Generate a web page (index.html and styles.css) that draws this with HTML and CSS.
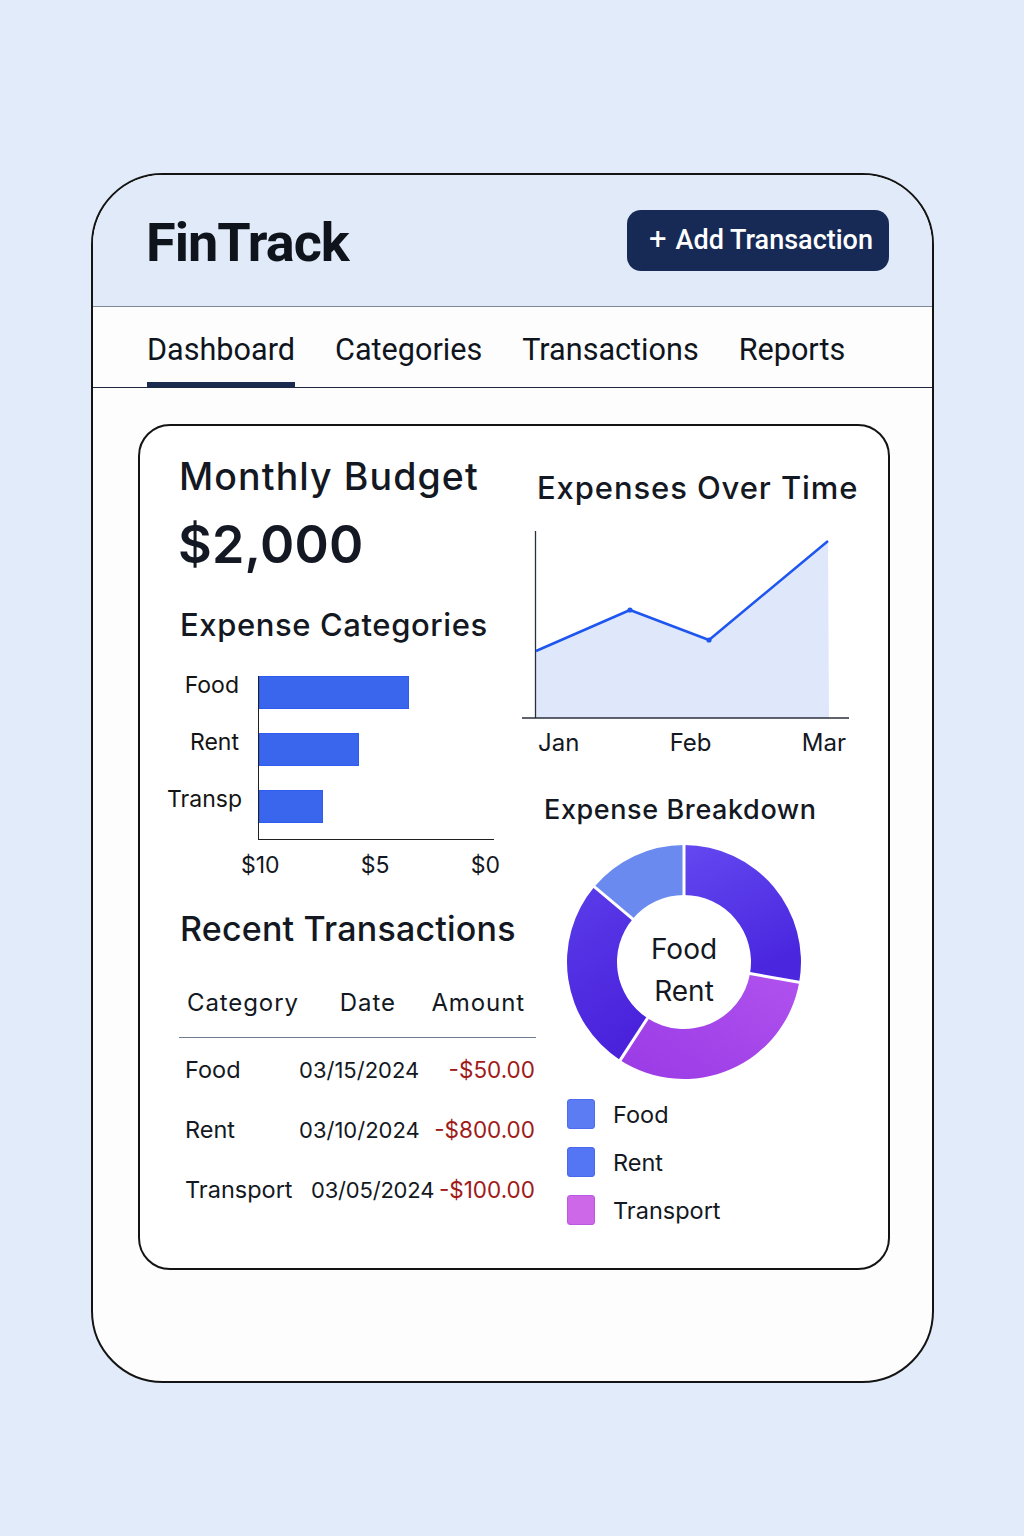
FILE: index.html
```html
<!DOCTYPE html>
<html lang="en">
<head>
<meta charset="utf-8">
<title>FinTrack</title>
<link rel="stylesheet" href="styles.css">
</head>
<body>
<div class="app">
  <header class="topbar">
    <h1 class="brand">FinTrack</h1>
    <button class="add-btn"><span class="plus">+</span>Add Transaction</button>
  </header>
  <nav class="tabs">
    <a class="tab active">Dashboard</a>
    <a class="tab">Categories</a>
    <a class="tab">Transactions</a>
    <a class="tab">Reports</a>
  </nav>
  <main class="main">
    <section class="panel">
      <div class="col-left">
        <h2 class="budget-title">Monthly Budget</h2>
        <div class="budget-amount">$2,000</div>
        <h3 class="cat-title">Expense Categories</h3>
        <div class="bar-chart">
          <div class="bar-labels">
            <span class="bar-label">Food</span>
            <span class="bar-label">Rent</span>
            <span class="bar-label">Transp</span>
          </div>
          <div class="plot">
            <div class="bar" style="width:150px"></div>
            <div class="bar" style="width:100px"></div>
            <div class="bar" style="width:64px"></div>
          </div>
        </div>
        <div class="bar-ticks"><span>$10</span><span>$5</span><span>$0</span></div>

        <h3 class="recent-title">Recent Transactions</h3>
        <div class="tx-table">
          <div class="tx-head">
            <span class="th-cat">Category</span>
            <span class="th-date">Date</span>
            <span class="th-amt">Amount</span>
          </div>
          <div class="tx-row">
            <span class="td-cat">Food</span>
            <span class="td-date">03/15/2024</span>
            <span class="td-amt">-$50.00</span>
          </div>
          <div class="tx-row">
            <span class="td-cat">Rent</span>
            <span class="td-date">03/10/2024</span>
            <span class="td-amt">-$800.00</span>
          </div>
          <div class="tx-row tx-row-wide">
            <span class="td-cat">Transport</span>
            <span class="td-date">03/05/2024</span>
            <span class="td-amt">-$100.00</span>
          </div>
        </div>
      </div>

      <div class="col-right">
        <h3 class="time-title">Expenses Over Time</h3>
        <svg class="line-chart" width="330" height="192" viewBox="0 0 330 192">
          <polygon points="14,189 14,122 108,81 187,111 306,12 307,189" fill="#dfe8fb"/>
          <line x1="13.5" y1="2" x2="13.5" y2="189" stroke="#2a2f3a" stroke-width="1.3"/>
          <line x1="0" y1="189" x2="327" y2="189" stroke="#2a2f3a" stroke-width="1.3"/>
          <polyline points="14,122 108,81 187,111 306,12" fill="none" stroke="#1f56f0" stroke-width="2.5" stroke-linejoin="round"/>
          <circle cx="108" cy="81" r="2.6" fill="#1f56f0"/>
          <circle cx="187" cy="111" r="2.6" fill="#1f56f0"/>
        </svg>
        <div class="month-labels"><span>Jan</span><span>Feb</span><span>Mar</span></div>

        <h3 class="breakdown-title">Expense Breakdown</h3>
        <div class="donut-wrap">
          <svg class="donut" width="240" height="240" viewBox="0 0 240 240">
            <defs>
              <linearGradient id="g1" x1="0" y1="0" x2="0.4" y2="1">
                <stop offset="0" stop-color="#6448f0"/>
                <stop offset="1" stop-color="#4a27df"/>
              </linearGradient>
              <linearGradient id="g2" x1="1" y1="0" x2="0" y2="1">
                <stop offset="0" stop-color="#b052ee"/>
                <stop offset="1" stop-color="#9a3ae6"/>
              </linearGradient>
              <linearGradient id="g3" x1="0" y1="0" x2="0.3" y2="1">
                <stop offset="0" stop-color="#5a3ce9"/>
                <stop offset="1" stop-color="#4a22dc"/>
              </linearGradient>
            </defs>
            <path d="M120,3 A117,117 0 0 1 235.22,140.31 L185.98,131.63 A67,67 0 0 0 120,53 Z" fill="url(#g1)"/>
            <path d="M235.22,140.31 A117,117 0 0 1 56.28,218.13 L83.51,176.19 A67,67 0 0 0 185.98,131.63 Z" fill="url(#g2)"/>
            <path d="M56.28,218.13 A117,117 0 0 1 30.37,44.8 L68.68,76.93 A67,67 0 0 0 83.51,176.19 Z" fill="url(#g3)"/>
            <path d="M30.37,44.8 A117,117 0 0 1 120,3 L120,53 A67,67 0 0 0 68.68,76.93 Z" fill="#6a8aef"/>
            <g stroke="#ffffff" stroke-width="3">
              <line x1="120" y1="0" x2="120" y2="56"/>
              <line x1="238" y1="140.8" x2="183" y2="131.1"/>
              <line x1="54.6" y1="220.6" x2="85.1" y2="173.7"/>
              <line x1="28.1" y1="42.9" x2="71" y2="78.9"/>
            </g>
          </svg>
          <div class="donut-center"><span>Food</span><span>Rent</span></div>
        </div>
        <ul class="legend">
          <li><span class="swatch sw-food"></span>Food</li>
          <li><span class="swatch sw-rent"></span>Rent</li>
          <li><span class="swatch sw-transport"></span>Transport</li>
        </ul>
      </div>
    </section>
  </main>
</div>
</body>
</html>
```
FILE: styles.css
```css
* { box-sizing: border-box; }

html, body {
  margin: 0;
  padding: 0;
}

body {
  background: #e2ebf9;
  font-family: Inter, "Noto Sans", sans-serif;
  color: #131822;
  width: 1024px;
  height: 1536px;
  overflow: hidden;
}

.app {
  margin: 173px 0 0 91px;
  width: 843px;
  height: 1210px;
  border: 2px solid #141414;
  border-radius: 72px;
  background: #fdfdfd;
  overflow: hidden;
}

/* header */
.topbar {
  height: 132px;
  background: #e1eaf8;
  border-bottom: 1.5px solid #7f8899;
  display: flex;
  align-items: center;
  justify-content: space-between;
  padding: 0 43px 0 53px;
}

.brand {
  margin: 4px 0 0;
  font-family: Roboto, "Liberation Sans", sans-serif;
  font-weight: 700;
  font-size: 54px;
  line-height: 54px;
  letter-spacing: -1px;
  color: #0f141c;
}

.add-btn {
  width: 262px;
  height: 61px;
  border: none;
  border-radius: 14px;
  background: #172a56;
  color: #ffffff;
  font-family: Roboto, "Liberation Sans", sans-serif;
  font-weight: 500;
  font-size: 27px;
  letter-spacing: 0;
  display: flex;
  align-items: center;
  justify-content: center;
  gap: 9px;
  padding: 0 0 2px 6px;
}

.plus {
  font-weight: 400;
  font-size: 31px;
  line-height: 1;
  margin-top: -2px;
}

/* tabs */
.tabs {
  height: 81px;
  border-bottom: 1.5px solid #1e2840;
  display: flex;
  gap: 40px;
  padding-left: 54px;
}

.tab {
  display: flex;
  align-items: center;
  font-family: Roboto, "Liberation Sans", sans-serif;
  font-size: 30.6px;
  color: #10151d;
  padding-top: 4px;
}

.tab.active {
  box-shadow: inset 0 -5px 0 #1b2b50;
}

/* main */
.main {
  padding: 36px 42px 0 45px;
}

.panel {
  height: 846px;
  border: 2px solid #141414;
  border-radius: 32px;
  background: #ffffff;
  padding: 29px 0 0 39px;
  display: grid;
  grid-template-columns: 357px 1fr;
  align-items: start;
}

h2, h3 { margin: 0; }

.budget-title {
  font-size: 37.5px;
  line-height: 44px;
  font-weight: 500;
  letter-spacing: 1.1px;
}

.budget-amount {
  margin-top: 16px;
  font-size: 52px;
  line-height: 60px;
  font-weight: 600;
  letter-spacing: 0.2px;
  margin-left: -1px;
}

.cat-title {
  margin-top: 31px;
  margin-left: 1px;
  font-size: 31px;
  line-height: 38px;
  font-weight: 500;
  letter-spacing: 0.6px;
}

/* bar chart */
.bar-chart {
  margin-top: 32px;
  margin-left: -17px;
  display: flex;
  gap: 16px;
}

.bar-labels {
  width: 80px;
  display: flex;
  flex-direction: column;
  gap: 24px;
  margin-top: -7px;
  text-align: right;
  padding-right: 3px;
}

.bar-label {
  height: 33px;
  line-height: 33px;
  font-size: 23px;
  color: #141414;
}

.bar-label:last-child { margin-right: -3px; }

.plot {
  width: 236px;
  height: 164px;
  border-left: 1.5px solid #202020;
  border-bottom: 1.5px solid #202020;
  display: flex;
  flex-direction: column;
  gap: 24px;
}

.bar {
  height: 33px;
  background: #3a66ee;
  border: 1px solid #2e5bf0;
}

.bar-ticks {
  margin: 11px 0 0 62px;
  width: 259px;
  display: flex;
  justify-content: space-between;
  font-size: 23px;
  line-height: 28px;
}

/* transactions */
.recent-title {
  margin-top: 30px;
  margin-left: 1px;
  font-size: 34px;
  line-height: 40px;
  font-weight: 500;
  letter-spacing: 0.2px;
}

.tx-table {
  margin-top: 39px;
}

.tx-head {
  display: flex;
  font-size: 24px;
  line-height: 30px;
  letter-spacing: 0.9px;
  padding: 0 11px 19px 8px;
  border-bottom: 1.5px solid #6e7c92;
}

.th-date { margin-left: 41px; }
.th-amt { margin-left: auto; }

.tx-row {
  display: flex;
  font-size: 23.5px;
  line-height: 30px;
  padding: 0 1px 0 6px;
  margin-top: 30px;
}

.tx-head + .tx-row {
  margin-top: 17px;
}

.td-cat { min-width: 114px; }
.td-date { font-size: 22px; letter-spacing: 0; }
.tx-row-wide .td-date { margin-left: 12px; letter-spacing: -0.2px; }
.td-amt { margin-left: auto; color: #a01a1a; font-size: 22.5px; }

/* right column */
.col-right {
  padding-top: 14px;
}

.time-title {
  margin-left: 1px;
  font-size: 31px;
  line-height: 38px;
  font-weight: 500;
  letter-spacing: 0.9px;
}

.line-chart {
  display: block;
  margin: 22px 0 0 -14px;
}

.month-labels {
  margin: 7px 0 0 2px;
  width: 308px;
  display: flex;
  justify-content: space-between;
  font-size: 24px;
  line-height: 30px;
}

.breakdown-title {
  margin: 35px 0 0 8px;
  font-size: 27px;
  line-height: 34px;
  font-weight: 500;
  letter-spacing: 0.6px;
}

.donut-wrap {
  position: relative;
  width: 240px;
  height: 240px;
  margin: 15px 0 0 28px;
}

.donut { display: block; }

.donut-center {
  position: absolute;
  inset: 0;
  display: flex;
  flex-direction: column;
  align-items: center;
  justify-content: center;
  font-size: 28px;
  line-height: 42px;
  padding-top: 16px;
}

.legend {
  list-style: none;
  margin: 17px 0 0 31px;
  padding: 0;
  display: flex;
  flex-direction: column;
  gap: 18px;
}

.legend li {
  display: flex;
  align-items: center;
  gap: 18px;
  font-size: 23.5px;
  height: 30px;
}

.swatch {
  width: 28px;
  height: 30px;
  border-radius: 3px;
}

.sw-food { background: #5c7cf4; border: 1px solid #4e6cf0; }
.sw-rent { background: #5475f4; border: 1px solid #4868ee; }
.sw-transport { background: #cd68e9; border: 1px solid #bb58e0; }
```
